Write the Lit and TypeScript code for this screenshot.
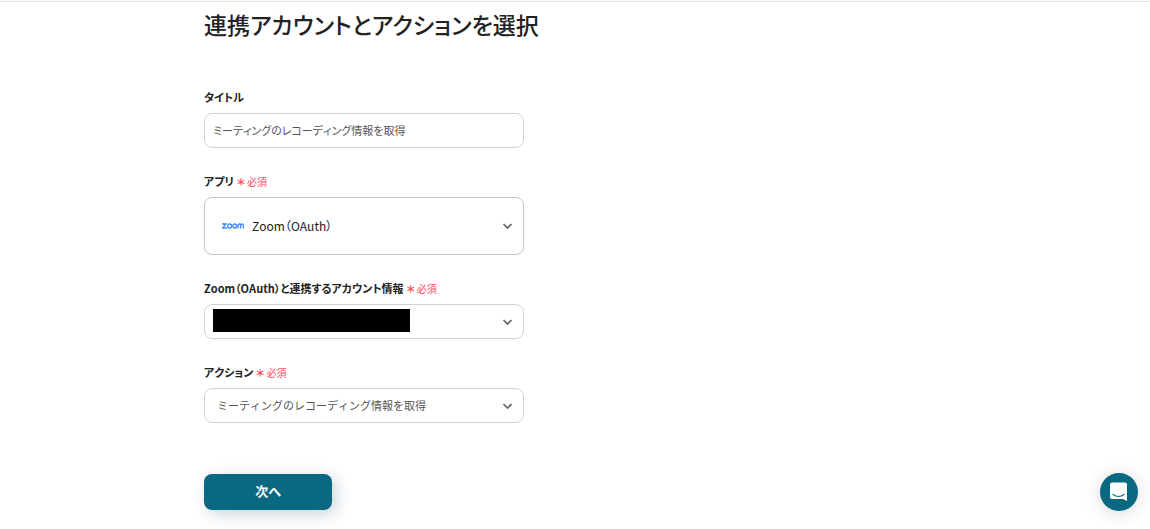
import { LitElement, html, css } from "lit";
import { customElement } from "lit/decorators.js";

const chevron = html`<svg class="chevron" viewBox="0 0 10 6" aria-hidden="true">
  <path d="M1.500 1l4 4 4-4" fill="none" stroke="#666" stroke-width="1.7" />
</svg>`;

const required = html`<span class="required"><b>＊</b>必須</span>`;

const zoomLogo = html`<svg class="zoom-logo" viewBox="0 0 22 6" aria-hidden="true">
  <g fill="none" stroke="#3f8cff" stroke-width="1.3">
    <path d="M0 1h4L.7 5H5" />
    <circle cx="7.6" cy="3" r="2" />
    <circle cx="12.8" cy="3" r="2" />
    <path d="M16 5.6V2.7Q16 1 17.4 1T18.7 2.7V5.6V2.7Q18.7 1 20 1T21.4 2.7V5.6" />
  </g>
</svg>`;

@customElement("app-root")
export class AppRoot extends LitElement {
  static styles = css`
    :host {
      display: block;
      min-height: 100vh;
      box-sizing: border-box;
      border-top: 1px solid #fff;
      background: #fff;
      color: #222;
      font-family: "Noto Sans CJK JP", sans-serif;
      font-size: 11px;
      font-feature-settings: "palt";
      font-kerning: none;
    }
    *, *::before { box-sizing: border-box; }
    .page {
      border-top: 1px solid #e2e4e4;
    }
    .content {
      max-width: 742px;
      margin: 0 auto;
      padding: 6px 0 16px;
    }
    h1 {
      margin: 0 0 50px;
      font-size: 23px;
      line-height: 32px;
      font-weight: 500;
      font-kerning: normal;
    }
    form {
      display: flex;
      flex-direction: column;
      gap: 26px;
      max-width: 320px;
    }
    .field {
      display: flex;
      flex-direction: column;
      gap: 8px;
    }
    label {
      line-height: 15px;
      font-weight: 700;
    }
    .required {
      margin-left: 3px;
      color: #ff4757;
      font-size: 10px;
      line-height: 1;
      font-weight: 400;
      font-feature-settings: normal;
    }
    .required b {
      margin-right: 2px;
      font-weight: 700;
      font-feature-settings: "palt";
    }
    input, select, button {
      margin: 0;
      font: inherit;
      font-feature-settings: inherit;
      font-kerning: inherit;
    }
    input, select {
      width: 100%;
      height: 35px;
      padding: 0 8px 2px;
      border: 1px solid #ced2db;
      border-radius: 8px;
      background: #fff;
      color: #555;
      appearance: none;
    }
    .control {
      display: grid;
      align-items: center;
    }
    .control > * { grid-area: 1 / 1; }
    .control select {
      padding: 0 32px 1px 12px;
      font-feature-settings: normal;
    }
    .control .app {
      height: 58px;
      padding-left: 47px;
      padding-bottom: 2px;
      border-color: #c8c8c8;
      color: #222;
      font-size: 12px;
      font-feature-settings: "palt";
    }
    .chevron {
      width: 10px;
      height: 6px;
      justify-self: end;
      margin-right: 12px;
      pointer-events: none;
    }
    .zoom-logo {
      width: 22px;
      height: 6px;
      margin-left: 18px;
      pointer-events: none;
    }
    .redaction {
      width: 197px;
      height: 23px;
      margin: 0 0 2px 9px;
      background: #000;
      pointer-events: none;
    }
    .next {
      width: 128px;
      height: 36px;
      margin-top: 25px;
      padding: 0 0 4px;
      border: 0;
      border-radius: 8px;
      background: #0b6881;
      color: #fff;
      font-size: 13px;
      font-weight: 700;
      box-shadow: 4px 4px 16px rgba(40, 70, 90, 0.24);
    }
    .chat {
      position: fixed;
      right: 12px;
      bottom: 18px;
      width: 38px;
      height: 38px;
      display: grid;
      place-items: center;
      padding: 0;
      border: 0;
      border-radius: 50%;
      background: #0b6881;
      box-shadow: 0 1px 5px rgba(0, 0, 0, 0.06), 0 2px 20px rgba(0, 0, 0, 0.14);
    }
    .chat svg { width: 18px; height: 20px; }
  `;

  render() {
    return html`
      <main class="page">
        <div class="content">
          <h1>連携アカウントとアクションを選択</h1>
          <form @submit=${(e: Event) => e.preventDefault()}>
            <div class="field">
              <label for="title">タイトル</label>
              <input id="title" type="text" value="ミーティングのレコーディング情報を取得" />
            </div>
            <div class="field">
              <label for="app">アプリ${required}</label>
              <div class="control">
                <select id="app" class="app"><option>Zoom（OAuth）</option></select>
                ${zoomLogo}${chevron}
              </div>
            </div>
            <div class="field">
              <label for="account">Zoom（OAuth）と連携するアカウント情報${required}</label>
              <div class="control">
                <select id="account"><option></option></select>
                <span class="redaction"></span>${chevron}
              </div>
            </div>
            <div class="field">
              <label for="action">アクション${required}</label>
              <div class="control">
                <select id="action"><option>ミーティングのレコーディング情報を取得</option></select>
                ${chevron}
              </div>
            </div>
            <button class="next" type="submit">次へ</button>
          </form>
        </div>
      </main>
      <button class="chat" type="button" aria-label="チャットを開く">
        <svg viewBox="0 0 18 20" aria-hidden="true">
          <path d="M2 0.500H15Q17 0.500 17 2.500V19L13 17H2Q0 17 0 15V2.500Q0 0.500 2 0.500Z" fill="#fff" />
          <path d="M3 12.500Q8.500 16.500 14 12.500" fill="none" stroke="#0b6881" stroke-width="1.200" stroke-linecap="round" />
        </svg>
      </button>
    `;
  }
}
